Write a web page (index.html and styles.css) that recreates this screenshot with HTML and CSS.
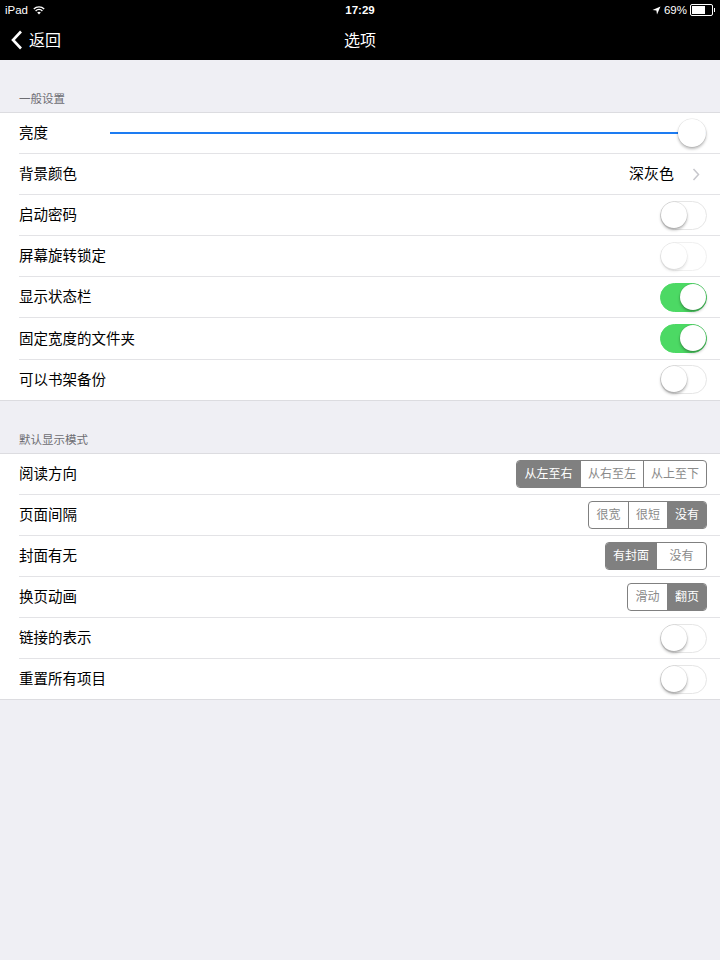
FILE: index.html
```html
<html>

<head>
    <meta charset="utf-8">
    <link rel="stylesheet" href="styles.css">
</head>

<body>
    <div class="statusBar">
        <div class="statusLeft">iPad
            <svg class="wifi" width="12" height="9" viewBox="0 0 12 9">
                <path d="M6 8.6 L4.2 6.6 A2.6 2.6 0 0 1 7.8 6.6 Z" fill="#fff"/>
                <path d="M2.6 4.9 A4.9 4.9 0 0 1 9.4 4.9" stroke="#fff" stroke-width="1.4" fill="none"/>
                <path d="M0.8 3 A7.4 7.4 0 0 1 11.2 3" stroke="#fff" stroke-width="1.4" fill="none"/>
            </svg>
        </div>
        <div class="statusTime">17:29</div>
        <div class="statusRight">
            <svg width="9" height="9" viewBox="0 0 9 9">
                <path d="M8.5 0.5 L0.5 4 L4.4 4.6 L5 8.5 Z" fill="#fff"/>
            </svg>
            <span>69%</span>
            <span class="battery"><span class="batteryLevel"></span></span>
        </div>
    </div>

    <div class="navBar">
        <div class="back">
            <svg width="12" height="20" viewBox="0 0 12 20">
                <path d="M10 1.5 L2 10 L10 18.5" stroke="#fff" stroke-width="2.6" fill="none"/>
            </svg>
            <span>返回</span>
        </div>
        <div class="navTitle">选项</div>
    </div>

    <div class="sectionTitle">一般设置</div>
    <ul class="group">
        <li class="row">
            <span class="label">亮度</span>
            <div class="slider"><div class="sliderTrack"></div><div class="sliderThumb"></div></div>
        </li>
        <li class="row">
            <span class="label">背景颜色</span>
            <span class="value">深灰色</span>
            <svg class="chevron" width="8" height="13" viewBox="0 0 8 13">
                <path d="M1.5 1 L6.5 6.5 L1.5 12" stroke="#c7c7cc" stroke-width="1.5" fill="none"/>
            </svg>
        </li>
        <li class="row">
            <span class="label">启动密码</span>
            <div class="switch"><div class="knob"></div></div>
        </li>
        <li class="row">
            <span class="label">屏幕旋转锁定</span>
            <div class="switch disabled"><div class="knob"></div></div>
        </li>
        <li class="row">
            <span class="label">显示状态栏</span>
            <div class="switch on"><div class="knob"></div></div>
        </li>
        <li class="row">
            <span class="label">固定宽度的文件夹</span>
            <div class="switch on"><div class="knob"></div></div>
        </li>
        <li class="row">
            <span class="label">可以书架备份</span>
            <div class="switch"><div class="knob"></div></div>
        </li>
    </ul>

    <div class="sectionTitle">默认显示模式</div>
    <ul class="group">
        <li class="row">
            <span class="label">阅读方向</span>
            <div class="segmented">
                <span class="selected">从左至右</span><span>从右至左</span><span>从上至下</span>
            </div>
        </li>
        <li class="row">
            <span class="label">页面间隔</span>
            <div class="segmented">
                <span>很宽</span><span>很短</span><span class="selected">没有</span>
            </div>
        </li>
        <li class="row">
            <span class="label">封面有无</span>
            <div class="segmented">
                <span class="selected">有封面</span><span>没有</span>
            </div>
        </li>
        <li class="row">
            <span class="label">换页动画</span>
            <div class="segmented">
                <span>滑动</span><span class="selected">翻页</span>
            </div>
        </li>
        <li class="row">
            <span class="label">链接的表示</span>
            <div class="switch"><div class="knob"></div></div>
        </li>
        <li class="row">
            <span class="label">重置所有项目</span>
            <div class="switch"><div class="knob"></div></div>
        </li>
    </ul>
</body>

</html>
```

FILE: styles.css
```css
body {
    margin: 0;
    background-color: #efeff4;
    font-family: "Liberation Sans", "Noto Sans CJK SC", sans-serif;
    color: #000;
}

/* status bar */

.statusBar {
    height: 20px;
    background-color: #000;
    color: #fff;
    font-size: 11.5px;
    display: flex;
    align-items: center;
    justify-content: space-between;
    padding: 0 4px 0 5px;
    position: relative;
}

.statusLeft {
    display: flex;
    align-items: center;
    gap: 5px;
}

.statusTime {
    position: absolute;
    left: 0;
    right: 0;
    text-align: center;
    font-weight: bold;
    font-size: 11.5px;
}

.statusRight {
    display: flex;
    align-items: center;
    gap: 3px;
}

.battery {
    width: 19px;
    height: 8px;
    border: 1px solid #fff;
    border-radius: 2px;
    padding: 1px;
    margin-right: 3px;
    position: relative;
    display: flex;
}

.battery::after {
    content: "";
    position: absolute;
    right: -3px;
    top: 3px;
    width: 1.5px;
    height: 4px;
    background-color: #fff;
}

.batteryLevel {
    width: 69%;
    background-color: #fff;
}

/* nav bar */

.navBar {
    height: 40px;
    box-sizing: border-box;
    padding-bottom: 3px;
    background-color: #000;
    color: #fff;
    display: flex;
    align-items: center;
    position: relative;
    font-size: 16px;
}

.back {
    display: flex;
    align-items: center;
    gap: 6px;
    padding-left: 11px;
}

.back svg {
    margin-top: 2px;
}

.navTitle {
    position: absolute;
    left: 0;
    right: 0;
    text-align: center;
    pointer-events: none;
}

/* groups */

.sectionTitle {
    height: 52px;
    box-sizing: border-box;
    padding: 0 19px 6px;
    display: flex;
    align-items: flex-end;
    font-size: 11.5px;
    color: #6d6d72;
}

.group {
    list-style: none;
    margin: 0;
    padding: 0 0 0 19px;
    background-color: #fff;
    border-top: 1px solid #dcdce0;
    border-bottom: 1px solid #dcdce0;
}

.row {
    height: 41.1px;
    box-sizing: border-box;
    display: flex;
    align-items: center;
    padding-right: 13px;
    border-bottom: 1px solid #e3e3e6;
}

.row:last-child {
    border-bottom: none;
    height: 40.1px;
}

.label {
    font-size: 14.5px;
    flex: 1;
    white-space: nowrap;
    padding-bottom: 3px;
}

.value {
    font-size: 15px;
    margin-right: 18px;
    padding-bottom: 3px;
}

.chevron {
    margin-right: 7px;
}

/* slider */

.slider {
    position: relative;
    flex: 0 0 610px;
    height: 30px;
    display: flex;
    align-items: center;
    margin-right: -13px;
}

.sliderTrack {
    flex: 1;
    height: 2px;
    background-color: #1d7cf2;
    margin-right: 14px;
}

.sliderThumb {
    position: absolute;
    right: 14px;
    top: 1px;
    width: 28px;
    height: 28px;
    border-radius: 50%;
    background-color: #fff;
    box-shadow: 0 2px 3px rgba(0, 0, 0, 0.28), 0 0 0 0.5px rgba(0, 0, 0, 0.1);
}

/* switch */

.switch {
    width: 47px;
    height: 29px;
    box-sizing: border-box;
    border-radius: 15px;
    border: 1.5px solid #e6e6e6;
    background-color: #fff;
    position: relative;
}

.knob {
    position: absolute;
    top: 0;
    left: 0;
    width: 26px;
    height: 26px;
    border-radius: 50%;
    background-color: #fff;
    box-shadow: 0 2px 3px rgba(0, 0, 0, 0.3), 0 0 0 0.5px rgba(0, 0, 0, 0.12);
}

.switch.on {
    background-color: #4cd964;
    border-color: #4cd964;
}

.switch.on .knob {
    left: auto;
    right: 0;
}

.switch.disabled {
    border-color: #f0f0f0;
}

.switch.disabled .knob {
    box-shadow: 0 2px 3px rgba(0, 0, 0, 0.12), 0 0 0 0.5px rgba(0, 0, 0, 0.06);
}

/* segmented */

.segmented {
    display: inline-grid;
    grid-auto-flow: column;
    grid-auto-columns: 1fr;
    height: 28px;
    box-sizing: border-box;
    border: 1px solid #808080;
    border-radius: 4px;
    overflow: hidden;
    font-size: 12px;
    color: #8a8a8a;
}

.segmented span {
    display: flex;
    align-items: center;
    justify-content: center;
    padding: 0 7px 2px;
    border-left: 1px solid #808080;
    white-space: nowrap;
}

.segmented span:first-child {
    border-left: none;
}

.segmented .selected {
    background-color: #808080;
    color: #fff;
}
```
